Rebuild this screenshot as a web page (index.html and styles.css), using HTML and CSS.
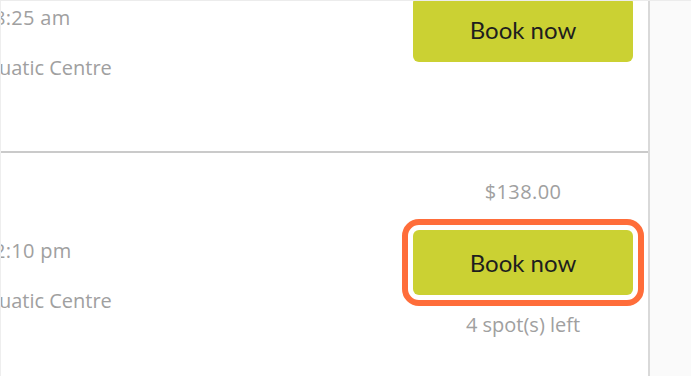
FILE: index.html
```html
<!DOCTYPE html>
<html>
<head>
<meta charset="utf-8">
<link rel="stylesheet" href="styles.css">
</head>
<body>
<div class="viewport">
  <div class="card">
    <div class="row">
      <div class="info">
        <div class="time">8:25 am</div>
        <div class="venue">Aquatic Centre</div>
      </div>
      <div class="action">
        <div class="price">$138.00</div>
        <button class="book">Book now</button>
      </div>
    </div>
    <div class="row">
      <div class="info">
        <div class="time">2:10 pm</div>
        <div class="venue">Aquatic Centre</div>
      </div>
      <div class="action">
        <div class="price">$138.00</div>
        <button class="book book-focus">Book now</button>
        <div class="spots">4 spot(s) left</div>
      </div>
    </div>
  </div>
  <div class="side"></div>
</div>
</body>
</html>
```

FILE: styles.css
```css
html, body {
  margin: 0;
  padding: 0;
  background: #fafafa;
}
.viewport {
  display: flex;
  height: 376px;
  overflow: hidden;
  border-top: 1px solid #ececec;
  box-sizing: border-box;
}
.card {
  width: 647px;
  flex: none;
  background: #fff;
  border-left: 1px solid #eeeeee;
  border-right: 2px solid #d9d9d9;
  margin-top: -81px;
  overflow: hidden;
  font-family: "Open Sans", sans-serif;
  color: #a0a0a0;
  font-size: 20px;
}
.row {
  display: flex;
  justify-content: space-between;
  height: 231px;
  border-bottom: 2px solid #cacaca;
}
.info {
  padding-top: 84px;
  line-height: 28px;
}
.time {
  margin-left: -7px;
  letter-spacing: 0.3px;
}
.venue {
  margin-left: -27px;
  margin-top: 22px;
}
.action {
  display: flex;
  flex-direction: column;
  align-items: center;
  width: 220px;
  margin-right: 15px;
  padding-top: 25px;
  line-height: 28px;
}
.price {
  margin-bottom: 24px;
  letter-spacing: 0.4px;
}
.book {
  width: 220px;
  height: 65px;
  border: none;
  border-radius: 6px;
  background: #cbd133;
  color: #1e1e1e;
  font-family: Lato, sans-serif;
  font-size: 24px;
  padding: 0;
  cursor: pointer;
}
.book-focus {
  outline: 6px solid #ff6d3a;
  outline-offset: 5px;
}
.spots {
  margin-top: 16px;
}
.side {
  flex: 1;
  background: #fafafa;
}
```
